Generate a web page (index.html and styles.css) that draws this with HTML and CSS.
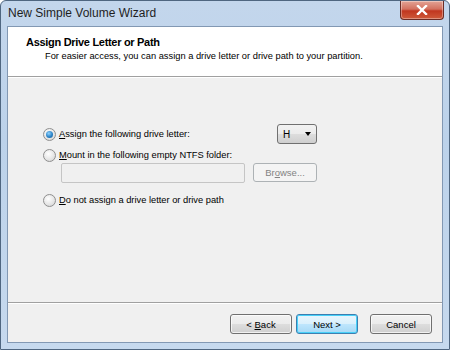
FILE: index.html
```html
<!DOCTYPE html>
<html lang="en">
<head>
    <meta charset="UTF-8">
    <title>New Simple Volume Wizard</title>
    <link rel="stylesheet" href="styles.css">
</head>
<body>
    <div class="window">
        <div class="title-bar">
            <span class="title">New Simple Volume Wizard</span>
            <div class="close-btn">
                <svg width="12" height="10" viewBox="0 0 12 10">
                    <path d="M2 1 L10 9 M10 1 L2 9" stroke="#fff" stroke-width="2.4" stroke-linecap="square"/>
                </svg>
            </div>
        </div>
        <div class="client">
            <div class="wizard-header">
                <div class="header-title">Assign Drive Letter or Path</div>
                <div class="header-sub">For easier access, you can assign a drive letter or drive path to your partition.</div>
            </div>
            <div class="wizard-body">
                <div class="option-row">
                    <span class="radio checked"></span>
                    <span class="label"><u>A</u>ssign the following drive letter:</span>
                    <div class="combo">
                        <span>H</span>
                        <span class="arrow"></span>
                    </div>
                </div>
                <div class="option-row second">
                    <span class="radio"></span>
                    <span class="label"><u>M</u>ount in the following empty NTFS folder:</span>
                </div>
                <div class="folder-row">
                    <div class="textbox"></div>
                    <button class="btn disabled">Br<u>o</u>wse...</button>
                </div>
                <div class="option-row third">
                    <span class="radio"></span>
                    <span class="label"><u>D</u>o not assign a drive letter or drive path</span>
                </div>
            </div>
            <div class="wizard-footer">
                <button class="btn">&lt; <u>B</u>ack</button>
                <button class="btn default">Next &gt;</button>
                <button class="btn cancel">Cancel</button>
            </div>
        </div>
    </div>
</body>
</html>
```

FILE: styles.css
```css
body {
    margin: 0;
    width: 450px;
    height: 350px;
    overflow: hidden;
    font-family: "Liberation Sans", Arial, sans-serif;
    font-size: 9.3px;
    color: #000;
}

.window {
    box-sizing: border-box;
    width: 450px;
    height: 350px;
    border: 1px solid #4f6680;
    border-radius: 6px 6px 0 0;
    background: linear-gradient(to bottom, #c3d6ec 0%, #bcd2ea 40%, #c6d9ee 100%);
    display: flex;
    flex-direction: column;
    padding: 0 6px 6px 6px;
}

.title-bar {
    height: 25px;
    display: flex;
    align-items: center;
    justify-content: space-between;
}

.title {
    font-size: 12px;
    color: #1e1e1e;
    padding-left: 1px;
    margin-top: -2px;
}

.close-btn {
    width: 42px;
    height: 18px;
    margin-top: -7px;
    margin-right: -1px;
    border: 1px solid #6b2c25;
    border-top: none;
    border-radius: 0 0 4px 4px;
    background: linear-gradient(to bottom, #e3a496 0%, #d3715f 45%, #c1361f 55%, #cf5a3a 100%);
    display: flex;
    align-items: center;
    justify-content: center;
    box-shadow: inset 0 0 0 1px rgba(255, 255, 255, 0.35);
}

.client {
    flex: 1;
    border: 1px solid #8298b3;
    background: #f0f0f0;
    display: flex;
    flex-direction: column;
}

.wizard-header {
    background: #fff;
    height: 50px;
    border-bottom: 1px solid #a0a0a0;
    box-shadow: 0 1px 0 #fff;
    box-sizing: border-box;
    padding: 9px 0 0 18px;
}

.header-title {
    font-size: 11px;
    font-weight: bold;
    letter-spacing: -0.3px;
    line-height: 13px;
}

.header-sub {
    padding-left: 19px;
    line-height: 13px;
    margin-top: 1px;
}

.wizard-body {
    flex: 1;
    padding: 47px 0 0 35px;
}

.option-row {
    display: flex;
    align-items: center;
    height: 20px;
}

.option-row.second {
    margin-top: 4px;
    height: 14px;
}

.option-row.third {
    margin-top: 7px;
}

.label {
    margin-left: 3px;
    color: #000;
}

.radio {
    width: 11px;
    height: 11px;
    border: 1px solid #8f8f8f;
    border-radius: 50%;
    background: radial-gradient(circle at 40% 35%, #ffffff 0%, #e6e6e6 55%, #cfcfcf 100%);
    display: flex;
    align-items: center;
    justify-content: center;
    flex-shrink: 0;
}

.radio.checked::after {
    content: "";
    width: 7px;
    height: 7px;
    border-radius: 50%;
    background: radial-gradient(circle at 40% 35%, #8fd3ff 0%, #2c83c7 55%, #145b93 100%);
}

.combo {
    margin-left: auto;
    margin-right: 125px;
    width: 28px;
    height: 18px;
    border: 1px solid #707070;
    border-radius: 3px;
    background: linear-gradient(to bottom, #f2f2f2 0%, #ebebeb 50%, #dddddd 51%, #cfcfcf 100%);
    display: flex;
    align-items: center;
    justify-content: space-between;
    padding: 0 5px;
    font-size: 10px;
}

.arrow {
    width: 0;
    height: 0;
    border-left: 3px solid transparent;
    border-right: 3px solid transparent;
    border-top: 4px solid #000;
}

.folder-row {
    display: flex;
    gap: 8px;
    margin: 1px 0 0 18px;
}

.textbox {
    width: 182px;
    height: 18px;
    border: 1px solid #c5c5c5;
    border-radius: 2px;
    background: #f0f0f0;
}

.btn {
    font-family: "Liberation Sans", Arial, sans-serif;
    font-size: 9.5px;
    width: 62px;
    height: 20px;
    padding: 0;
    border: 1px solid #707070;
    border-radius: 3px;
    background: linear-gradient(to bottom, #f2f2f2 0%, #ebebeb 50%, #dddddd 51%, #cfcfcf 100%);
    box-shadow: inset 0 0 0 1px rgba(255, 255, 255, 0.7);
    color: #000;
}

.btn.disabled {
    width: 64px;
    height: 19px;
    border-color: #adb2b5;
    background: #f4f4f4;
    color: #838383;
    box-shadow: none;
}

.btn.default {
    border-color: #3c7fb1;
    box-shadow: inset 0 0 0 1px #48d0f8;
    background: linear-gradient(to bottom, #eaf6fd 0%, #d9f0fc 50%, #bee6fd 51%, #a7d9f5 100%);
}

.wizard-footer {
    height: 40px;
    border-top: 1px solid #a0a0a0;
    box-shadow: inset 0 1px 0 #fff;
    display: flex;
    justify-content: flex-end;
    gap: 4px;
    padding: 11px 10px 0 0;
    box-sizing: border-box;
}

.btn.cancel {
    margin-left: 8px;
}
```
